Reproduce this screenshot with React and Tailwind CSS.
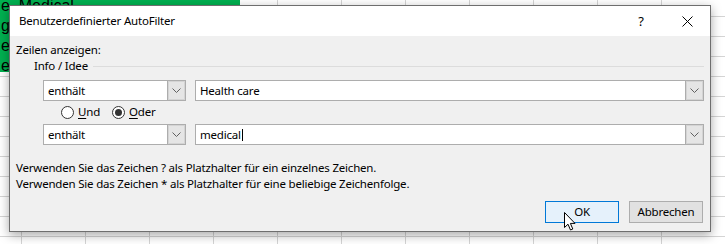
import React from 'react';

const dialogFont = { fontFamily: '"Noto Sans", "Open Sans", sans-serif' };

function Chevron() {
  return (
    <svg width="9" height="5" viewBox="0 0 9 5" className="text-[#606060]">
      <path d="M0.5 0.5 L4.5 4.5 L8.5 0.5" fill="none" stroke="currentColor" strokeWidth="1" />
    </svg>
  );
}

function DropButton() {
  return (
    <div className="flex h-full w-[18px] shrink-0 items-center justify-center border-l border-[#adadad] bg-[#e5e5e5] shadow-[inset_0_0_0_1px_#d4d4d4]">
      <Chevron />
    </div>
  );
}

function Combo({ value }) {
  return (
    <div className="flex h-[21px] w-[143px] shrink-0 items-stretch border border-[#adadad] bg-white">
      <div className="flex flex-1 items-center pl-[4px]">{value}</div>
      <DropButton />
    </div>
  );
}

function ValueField({ value, caret }) {
  return (
    <div className="ml-[9px] flex h-[21px] w-[509px] items-stretch border border-[#adadad] bg-white">
      <div className="flex flex-1 items-center pl-[4px]">
        {value}
        {caret && <span className="ml-px inline-block h-[12px] w-px bg-black" />}
      </div>
      <DropButton />
    </div>
  );
}

function Radio({ checked, accel, rest, className = '' }) {
  return (
    <div className={`flex items-center ${className}`}>
      <div className="flex h-[13px] w-[13px] items-center justify-center rounded-full border border-[#333333] bg-white">
        {checked && <div className="h-[7px] w-[7px] rounded-full bg-[#333333]" />}
      </div>
      <span className="ml-[4px]">
        <span className="underline underline-offset-2">{accel}</span>
        {rest}
      </span>
    </div>
  );
}

export default function App() {
  return (
    <div className="relative h-[244px] w-[725px] overflow-hidden bg-white bg-[linear-gradient(#d4d4d4_1px,transparent_1px),linear-gradient(90deg,#d4d4d4_1px,transparent_1px)] bg-[size:64px_20px] bg-[position:21px_16px]">
      {/* green merged cell of the sheet behind the dialog */}
      <div
        className="h-[76px] w-[240px] bg-[#00b050] pl-[1px] text-[16px] leading-[20px] text-black"
        style={{ fontFamily: '"Liberation Sans", sans-serif' }}
      >
        <div className="-mt-[4px]">e, Medical</div>
        <div>ge</div>
        <div>e</div>
        <div>er</div>
      </div>

      {/* dialog window */}
      <div
        className="absolute left-[9px] top-[5px] flex h-[227px] w-[702px] flex-col border border-[#6e6e6e] bg-[#f0f0f0] text-[11.5px] leading-[16px] tracking-[-0.2px] text-black shadow-[0_3px_10px_rgba(0,0,0,0.35)]"
        style={dialogFont}
      >
        <div className="flex h-[30px] items-center bg-white">
          <div className="flex-1 pl-[9px]">Benutzerdefinierter AutoFilter</div>
          <div className="flex h-full w-[46px] items-center justify-center text-[13px]">?</div>
          <div className="flex h-full w-[46px] items-center justify-center">
            <svg width="11" height="11" viewBox="0 0 11 11">
              <path d="M0.5 0.5 L10.5 10.5 M10.5 0.5 L0.5 10.5" stroke="#000" strokeWidth="1" />
            </svg>
          </div>
        </div>

        <div className="flex flex-1 flex-col px-[6px]">
          <div className="mt-[6px] h-[16px]">Zeilen anzeigen:</div>

          <div className="flex h-[16px] items-center pl-[18px]">
            <span>Info / Idee</span>
            <div className="ml-[5px] h-px flex-1 bg-[#dcdcdc]" />
          </div>

          <div className="ml-[27px] mt-[6px] flex">
            <Combo value="enthält" />
            <ValueField value="Health care" />
          </div>

          <div className="ml-[45px] mt-[3px] flex h-[16px] items-center">
            <Radio accel="U" rest="nd" />
            <Radio accel="O" rest="der" checked className="ml-[12px]" />
          </div>

          <div className="ml-[27px] mt-[4px] flex">
            <Combo value="enthält" />
            <ValueField value="medical" caret />
          </div>

          <div className="mt-[15px]">
            <div>Verwenden Sie das Zeichen ? als Platzhalter für ein einzelnes Zeichen.</div>
            <div>Verwenden Sie das Zeichen * als Platzhalter für eine beliebige Zeichenfolge.</div>
          </div>

          <div className="mr-[1px] mt-[9px] flex justify-end gap-[10px]">
            <div className="flex h-[22px] w-[74px] items-center justify-center border border-[#0078d7] bg-[#e5f1fb]">
              OK
            </div>
            <div className="flex h-[22px] w-[74px] items-center justify-center border border-[#adadad] bg-[#e1e1e1]">
              Abbrechen
            </div>
          </div>
        </div>
      </div>

      {/* mouse pointer over the OK button */}
      <svg className="absolute left-[564px] top-[212px]" width="13" height="20" viewBox="0 0 13 20">
        <path
          d="M0.5 0.5 L0.5 15.5 L4 12.2 L6.5 18 L8.8 17 L6.4 11.4 L11 11.4 Z"
          fill="#fff"
          stroke="#000"
          strokeWidth="1"
          strokeLinejoin="miter"
        />
      </svg>
    </div>
  );
}
